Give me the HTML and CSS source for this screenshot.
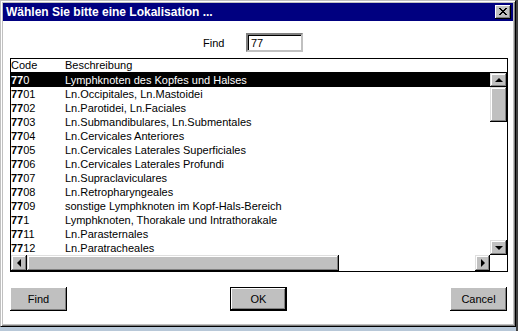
FILE: index.html
```html
<!DOCTYPE html>
<html>
<head>
<meta charset="utf-8">
<title>Lokalisation</title>
<link rel="stylesheet" href="styles.css">
</head>
<body>
<div class="desk">
<div class="window">
  <div class="titlebar">
    <span class="title">Wählen Sie bitte eine Lokalisation ...</span>
    <div class="close"><svg width="8" height="7" viewBox="0 0 8 7"><path d="M0 0h2v1h1v1h2v-1h1v-1h2v1h-1v1h-1v1h-1v1h1v1h1v1h1v1h-2v-1h-1v-1h-2v1h-1v1h-2v-1h1v-1h1v-1h1v-1h-1v-1h-1v-1h-1z" fill="#000"/></svg></div>
  </div>
  <div class="client">
    <div class="findrow">
      <span class="findlabel">Find</span>
      <div class="input">77</div>
    </div>
    <div class="list">
      <div class="head"><span class="code">Code</span><span class="desc">Beschreibung</span></div>
      <div class="body">
        <div class="rows">
          <div class="row sel"><span class="code"><b>77</b>0</span><span class="desc">Lymphknoten des Kopfes und Halses</span></div>
          <div class="row"><span class="code"><b>77</b>01</span><span class="desc">Ln.Occipitales, Ln.Mastoidei</span></div>
          <div class="row"><span class="code"><b>77</b>02</span><span class="desc">Ln.Parotidei, Ln.Faciales</span></div>
          <div class="row"><span class="code"><b>77</b>03</span><span class="desc">Ln.Submandibulares, Ln.Submentales</span></div>
          <div class="row"><span class="code"><b>77</b>04</span><span class="desc">Ln.Cervicales Anteriores</span></div>
          <div class="row"><span class="code"><b>77</b>05</span><span class="desc">Ln.Cervicales Laterales Superficiales</span></div>
          <div class="row"><span class="code"><b>77</b>06</span><span class="desc">Ln.Cervicales Laterales Profundi</span></div>
          <div class="row"><span class="code"><b>77</b>07</span><span class="desc">Ln.Supraclaviculares</span></div>
          <div class="row"><span class="code"><b>77</b>08</span><span class="desc">Ln.Retropharyngeales</span></div>
          <div class="row"><span class="code"><b>77</b>09</span><span class="desc">sonstige Lymphknoten im Kopf-Hals-Bereich</span></div>
          <div class="row"><span class="code"><b>77</b>1</span><span class="desc">Lymphknoten, Thorakale und Intrathorakale</span></div>
          <div class="row"><span class="code"><b>77</b>11</span><span class="desc">Ln.Parasternales</span></div>
          <div class="row"><span class="code"><b>77</b>12</span><span class="desc">Ln.Paratracheales</span></div>
        </div>
        <div class="vscroll">
          <div class="sbtn up"><span class="tri-up"></span></div>
          <div class="vthumb"></div>
          <div class="track"></div>
          <div class="sbtn down"><span class="tri-down"></span></div>
        </div>
      </div>
      <div class="hscroll">
        <div class="sbtn left"><span class="tri-left"></span></div>
        <div class="hthumb"></div>
        <div class="track"></div>
        <div class="sbtn right"><span class="tri-right"></span></div>
        <div class="corner"></div>
      </div>
    </div>
    <div class="buttons">
      <div class="btn">Find</div>
      <div class="btn default">OK</div>
      <div class="btn">Cancel</div>
    </div>
  </div>
</div>
</div>
</body>
</html>
```
FILE: styles.css
```css
html, body {
  margin: 0;
  padding: 0;
}
body {
  background: #b8c8d8;
  font-family: "Liberation Sans", Arial, sans-serif;
  font-size: 11px;
  color: #000;
  width: 518px;
  height: 331px;
  overflow: hidden;
}
.desk {
  width: 518px;
  height: 331px;
  background: linear-gradient(to right, transparent 516px, #404040 516px);
}
.window {
  width: 516px;
  height: 327px;
  box-sizing: border-box;
  border: 1px solid;
  border-color: #c0c0c0 #000 #000 #c0c0c0;
  box-shadow: inset 1px 1px #fff, inset -1px -1px #808080;
  padding: 2px;
  background: #c0c0c0;
  display: flex;
  flex-direction: column;
}
.titlebar {
  height: 18px;
  background: #000080;
  color: #fff;
  display: flex;
  align-items: center;
  padding: 0 2px 0 3px;
  flex: none;
}
.title {
  font-weight: bold;
  font-size: 12px;
  line-height: 18px;
  white-space: nowrap;
}
.close {
  margin-left: auto;
  width: 16px;
  height: 14px;
  box-sizing: border-box;
  background: #c0c0c0;
  box-shadow: inset -1px -1px #000, inset 1px 1px #fff, inset -2px -2px #808080;
  display: flex;
  align-items: center;
  justify-content: center;
  padding: 0 1px 1px 0;
}
.close svg { display: block; }
.client {
  flex: 1;
  background: #fff;
  padding: 12px 6px 0 7px;
}
.findrow {
  display: flex;
  align-items: center;
  height: 19px;
  padding-left: 193px;
}
.findlabel {
  width: 43px;
}
.input {
  width: 57px;
  height: 19px;
  box-sizing: border-box;
  border: 2px solid;
  border-color: #808080 #c0c0c0 #c0c0c0 #808080;
  box-shadow: inset 1px 1px #000;
  padding: 1px 0 0 3px;
  line-height: 14px;
}
.list {
  margin-top: 6px;
  width: 498px;
  height: 214px;
  box-sizing: border-box;
  border: 1px solid #000;
  display: flex;
  flex-direction: column;
}
.head {
  height: 13px;
  border-bottom: 1px solid #000;
  display: flex;
  align-items: center;
  line-height: 13px;
  flex: none;
}
.code {
  width: 54px;
  padding-left: 0;
  flex: none;
  white-space: nowrap;
}
.desc {
  white-space: nowrap;
}
.body {
  display: flex;
  height: 182px;
  flex: none;
}
.rows {
  flex: 1;
  overflow: hidden;
}
.row {
  height: 14px;
  display: flex;
  align-items: center;
  line-height: 14px;
}
.row.sel {
  background: #000;
  color: #fff;
}
.vscroll {
  width: 17px;
  display: flex;
  flex-direction: column;
  flex: none;
}
.sbtn {
  background: #c0c0c0;
  box-shadow: inset -1px -1px #000, inset 1px 1px #dfdfdf, inset -2px -2px #808080, inset 2px 2px #fff;
  display: flex;
  align-items: center;
  justify-content: center;
  flex: none;
}
.sbtn.up { height: 14px; }
.sbtn.down { height: 15px; }
.vthumb {
  height: 35px;
  background: #c0c0c0;
  box-shadow: inset -1px -1px #000, inset 1px 1px #dfdfdf, inset -2px -2px #808080, inset 2px 2px #fff;
  flex: none;
}
.track {
  flex: 1;
  background: #fff;
}
.hscroll {
  height: 16px;
  display: flex;
  flex: none;
}
.sbtn.left { width: 16px; }
.sbtn.right { width: 15px; }
.hthumb {
  width: 312px;
  background: #c0c0c0;
  box-shadow: inset -1px -1px #000, inset 1px 1px #dfdfdf, inset -2px -2px #808080, inset 2px 2px #fff;
  flex: none;
}
.corner {
  width: 17px;
  background: #fff;
  flex: none;
}
.tri-up, .tri-down, .tri-left, .tri-right {
  width: 0;
  height: 0;
  display: block;
}
.tri-up {
  border-left: 4px solid transparent;
  border-right: 4px solid transparent;
  border-bottom: 4px solid #000;
}
.tri-down {
  border-left: 4px solid transparent;
  border-right: 4px solid transparent;
  border-top: 4px solid #000;
}
.tri-left {
  border-top: 4px solid transparent;
  border-bottom: 4px solid transparent;
  border-right: 4px solid #000;
}
.tri-right {
  border-top: 4px solid transparent;
  border-bottom: 4px solid transparent;
  border-left: 4px solid #000;
}
.buttons {
  margin-top: 15px;
  width: 497px;
  display: flex;
  justify-content: space-between;
}
.btn {
  width: 57px;
  height: 24px;
  box-sizing: border-box;
  background: #c0c0c0;
  box-shadow: inset -1px -1px #000, inset 1px 1px #fff, inset -2px -2px #808080;
  display: flex;
  align-items: center;
  justify-content: center;
  padding-bottom: 1px;
}
.btn.default {
  border: 1px solid #000;
}
```
